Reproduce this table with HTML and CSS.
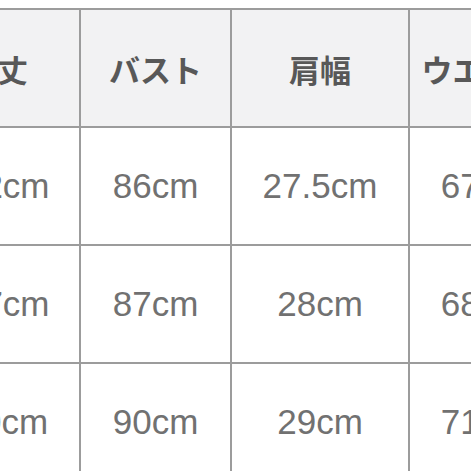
FILE: index.html
```html
<!DOCTYPE html>
<html lang="ja">
<head>
<meta charset="utf-8">
<link rel="stylesheet" href="styles.css">
</head>
<body>
<div class="viewport">
  <div class="size-table">
    <div class="cell head">着丈</div>
    <div class="cell head">バスト</div>
    <div class="cell head">肩幅</div>
    <div class="cell head">ウエスト</div>

    <div class="cell">102cm</div>
    <div class="cell">86cm</div>
    <div class="cell">27.5cm</div>
    <div class="cell">67cm</div>

    <div class="cell">107cm</div>
    <div class="cell">87cm</div>
    <div class="cell">28cm</div>
    <div class="cell">68cm</div>

    <div class="cell">110cm</div>
    <div class="cell">90cm</div>
    <div class="cell">29cm</div>
    <div class="cell">71cm</div>
  </div>
</div>
</body>
</html>
```

FILE: styles.css
```css
html, body {
  margin: 0;
  padding: 0;
  background: #ffffff;
}

.viewport {
  width: 471px;
  height: 471px;
  overflow: hidden;
  padding-top: 8px;
  box-sizing: border-box;
}

.size-table {
  display: grid;
  grid-template-columns: 164px 149px 176px 147px;
  grid-auto-rows: 116px;
  gap: 2px;
  padding: 2px;
  background: #9c9c9c;
  width: max-content;
  margin-left: -87px;
}

.cell {
  background: #ffffff;
  display: flex;
  align-items: center;
  justify-content: center;
  font-family: "Liberation Sans", "Noto Sans CJK JP", sans-serif;
  font-size: 35px;
  color: #717171;
  white-space: nowrap;
}

.cell.head {
  background: #f2f2f3;
  font-family: "Noto Sans CJK JP", sans-serif;
  font-weight: 700;
  font-size: 31px;
  color: #585858;
}
```
